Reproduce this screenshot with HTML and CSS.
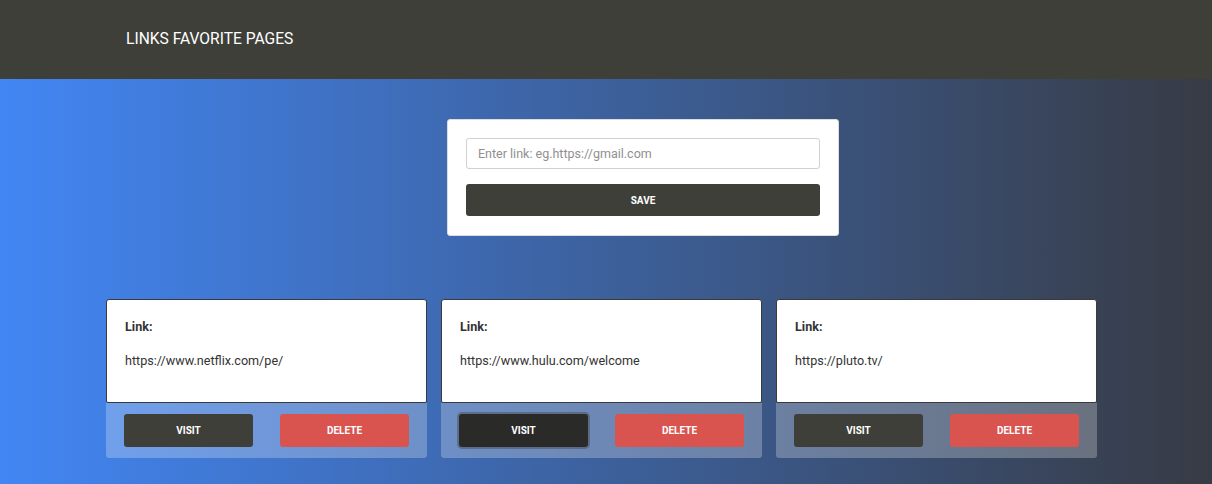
FILE: index.html
```html
<!DOCTYPE html>
<html lang="en">
<head>
<meta charset="utf-8">
<title>Links Favorite Pages</title>
<link rel="stylesheet" href="styles.css">
</head>
<body>
<header class="topbar">
  <h1 class="brand">LINKS FAVORITE PAGES</h1>
</header>
<main class="main">
  <section class="form-wrap">
    <form class="form-card">
      <input class="link-input" type="text" placeholder="Enter link: eg.https://gmail.com">
      <button type="button" class="btn btn-dark btn-save">SAVE</button>
    </form>
  </section>
  <section class="cards">
    <article class="card">
      <div class="card-body">
        <p class="card-label">Link:</p>
        <p class="card-url">https://www.netflix.com/pe/</p>
      </div>
      <div class="card-footer">
        <button type="button" class="btn btn-dark">VISIT</button>
        <button type="button" class="btn btn-danger">DELETE</button>
      </div>
    </article>
    <article class="card">
      <div class="card-body">
        <p class="card-label">Link:</p>
        <p class="card-url">https://www.hulu.com/welcome</p>
      </div>
      <div class="card-footer">
        <button type="button" class="btn btn-dark is-focused">VISIT</button>
        <button type="button" class="btn btn-danger">DELETE</button>
      </div>
    </article>
    <article class="card">
      <div class="card-body">
        <p class="card-label">Link:</p>
        <p class="card-url">https://pluto.tv/</p>
      </div>
      <div class="card-footer">
        <button type="button" class="btn btn-dark">VISIT</button>
        <button type="button" class="btn btn-danger">DELETE</button>
      </div>
    </article>
  </section>
</main>
</body>
</html>
```

FILE: styles.css
```css
* { box-sizing: border-box; }

html, body {
  margin: 0;
  padding: 0;
}

body {
  font-family: Roboto, "Liberation Sans", Arial, sans-serif;
  min-height: 484px;
  background: linear-gradient(to right, #4286f4, #373b44);
  color: #333;
}

.topbar {
  height: 79px;
  background: #3f3f3a;
  display: flex;
  align-items: center;
  padding-left: 126px;
}

.brand {
  margin: 0;
  font-size: 15.6px;
  font-weight: 400;
  color: #fff;
  line-height: 20px;
  padding-bottom: 2px;
}

.main {
  padding-top: 40px;
}

.form-wrap {
  display: flex;
  padding-left: 447px;
}

.form-card {
  width: 392px;
  background: #fff;
  border: 1px solid #ddd;
  border-radius: 3px;
  padding: 18px 18px 19px;
  display: flex;
  flex-direction: column;
  gap: 15px;
}

.link-input {
  height: 31px;
  width: 100%;
  border: 1px solid #cfd0d8;
  border-radius: 3px;
  padding: 0 11px;
  font-family: inherit;
  font-size: 12.5px;
  color: #333;
  outline: none;
}

.link-input::placeholder {
  color: #8f8f8f;
}

.btn {
  border: none;
  border-radius: 3px;
  font-family: inherit;
  font-size: 10px;
  font-weight: 700;
  color: #fff;
  height: 33px;
  cursor: pointer;
  padding: 0;
}

.btn-save {
  height: 32px;
  width: 100%;
}

.btn-dark {
  background: #3f3f3a;
}

.btn-dark.is-focused {
  background: #2a2a28;
  box-shadow: 0 0 0 2px rgba(70, 70, 70, 0.45);
}

.btn-danger {
  background: #d9534f;
}

.cards {
  margin-top: 63px;
  padding-left: 106px;
  display: flex;
  gap: 14px;
}

.card {
  width: 321px;
  display: flex;
  flex-direction: column;
}

.card-body {
  background: #fff;
  border: 1px solid #3a3a3a;
  border-radius: 3px 3px 2px 2px;
  height: 104px;
  padding: 18px 18px 0;
}

.card-label {
  margin: 0;
  font-size: 12.6px;
  font-weight: 700;
  line-height: 18px;
  color: #333;
}

.card-url {
  margin: 16px 0 0;
  font-size: 12.6px;
  line-height: 18px;
  color: #333;
}

.card-footer {
  height: 55px;
  background: rgba(255, 255, 255, 0.25);
  border-radius: 0 0 3px 3px;
  display: flex;
  justify-content: space-between;
  align-items: center;
  padding: 0 18px;
}

.card-footer .btn {
  width: 129px;
}
```
